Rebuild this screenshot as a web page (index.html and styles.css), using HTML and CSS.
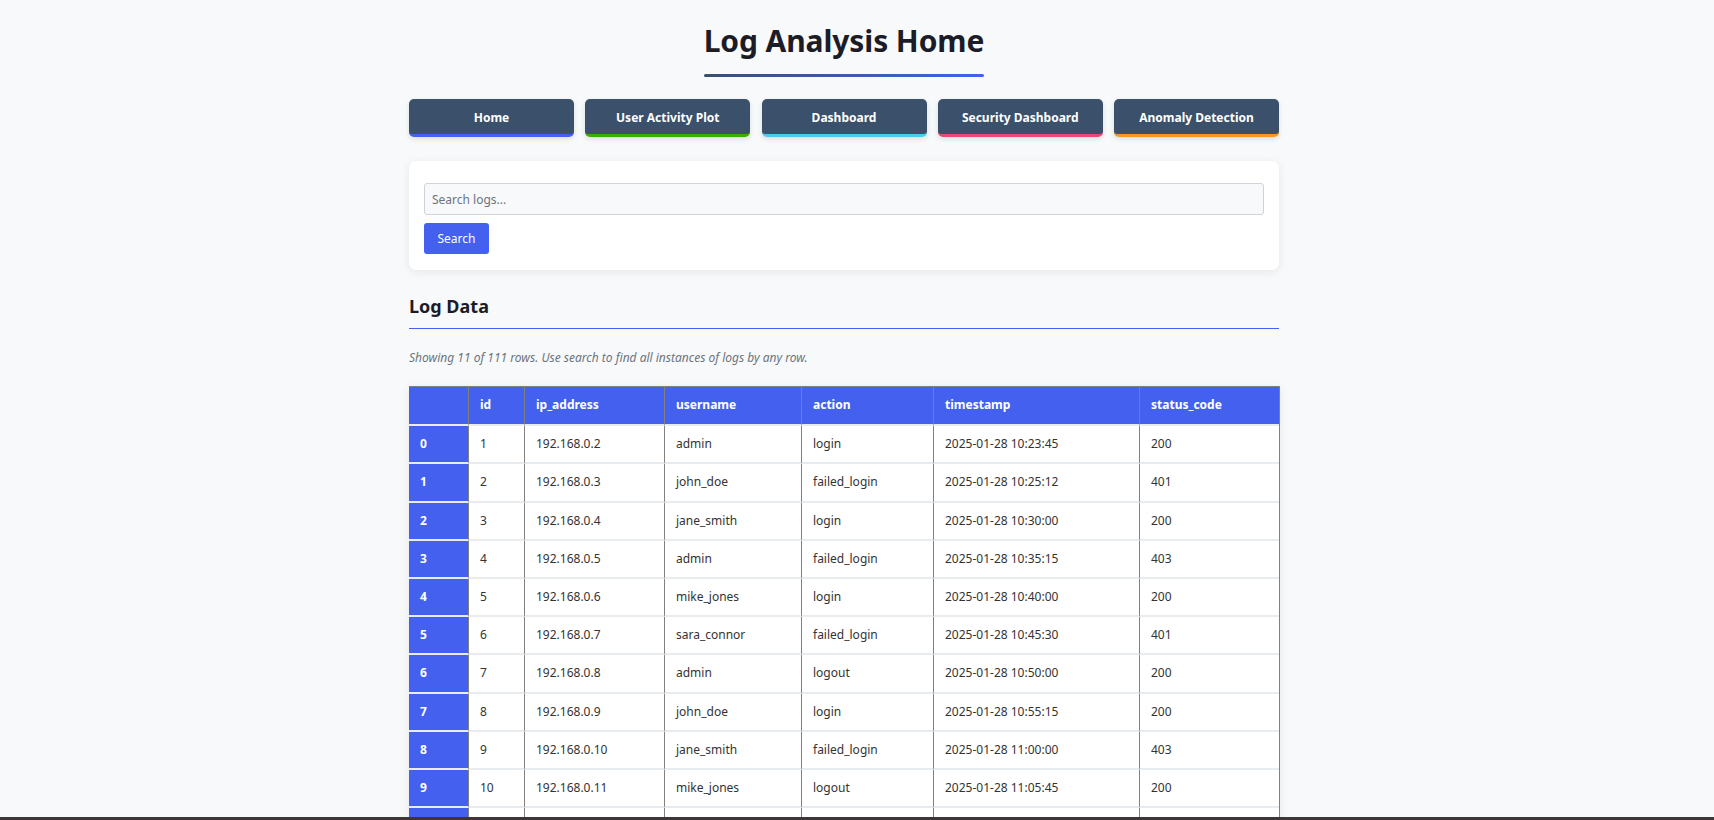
FILE: index.html
```html
<!DOCTYPE html>
<html lang="en">
<head>
<meta charset="utf-8">
<title>Log Analysis Home</title>
<link rel="stylesheet" href="styles.css">
</head>
<body>
<div class="container">
  <header class="page-header">
    <h1 class="title">Log Analysis Home</h1>
  </header>
  <nav class="nav">
    <a class="nav-btn nav-home" href="#">Home</a>
    <a class="nav-btn nav-activity" href="#">User Activity Plot</a>
    <a class="nav-btn nav-dash" href="#">Dashboard</a>
    <a class="nav-btn nav-security" href="#">Security Dashboard</a>
    <a class="nav-btn nav-anomaly" href="#">Anomaly Detection</a>
  </nav>
  <section class="card">
    <form class="search-form">
      <input class="search-input" type="text" placeholder="Search logs...">
      <button class="search-btn" type="button">Search</button>
    </form>
  </section>
  <h2 class="section-title">Log Data</h2>
  <p class="note">Showing 11 of 111 rows. Use search to find all instances of logs by any row.</p>
  <table class="data">
    <thead>
      <tr>
        <th class="c-idx"></th>
        <th class="c-id">id</th>
        <th class="c-ip">ip_address</th>
        <th class="c-user">username</th>
        <th class="c-act">action</th>
        <th class="c-ts">timestamp</th>
        <th class="c-st">status_code</th>
      </tr>
    </thead>
    <tbody>
      <tr><th>0</th><td>1</td><td>192.168.0.2</td><td>admin</td><td>login</td><td>2025-01-28 10:23:45</td><td>200</td></tr>
      <tr><th>1</th><td>2</td><td>192.168.0.3</td><td>john_doe</td><td>failed_login</td><td>2025-01-28 10:25:12</td><td>401</td></tr>
      <tr><th>2</th><td>3</td><td>192.168.0.4</td><td>jane_smith</td><td>login</td><td>2025-01-28 10:30:00</td><td>200</td></tr>
      <tr><th>3</th><td>4</td><td>192.168.0.5</td><td>admin</td><td>failed_login</td><td>2025-01-28 10:35:15</td><td>403</td></tr>
      <tr><th>4</th><td>5</td><td>192.168.0.6</td><td>mike_jones</td><td>login</td><td>2025-01-28 10:40:00</td><td>200</td></tr>
      <tr><th>5</th><td>6</td><td>192.168.0.7</td><td>sara_connor</td><td>failed_login</td><td>2025-01-28 10:45:30</td><td>401</td></tr>
      <tr><th>6</th><td>7</td><td>192.168.0.8</td><td>admin</td><td>logout</td><td>2025-01-28 10:50:00</td><td>200</td></tr>
      <tr><th>7</th><td>8</td><td>192.168.0.9</td><td>john_doe</td><td>login</td><td>2025-01-28 10:55:15</td><td>200</td></tr>
      <tr><th>8</th><td>9</td><td>192.168.0.10</td><td>jane_smith</td><td>failed_login</td><td>2025-01-28 11:00:00</td><td>403</td></tr>
      <tr><th>9</th><td>10</td><td>192.168.0.11</td><td>mike_jones</td><td>logout</td><td>2025-01-28 11:05:45</td><td>200</td></tr>
      <tr><th>10</th><td>11</td><td>192.168.0.12</td><td>sara_connor</td><td>login</td><td>2025-01-28 11:10:00</td><td>200</td></tr>
    </tbody>
  </table>
</div>
<div class="taskbar-edge"></div>
</body>
</html>
```

FILE: styles.css
```css
* { box-sizing: border-box; }

body {
  margin: 0;
  padding: 0 26px 0 0;
  background: #f8f9fa;
  font-family: "Noto Sans", "Open Sans", sans-serif;
  color: #333;
}

.container {
  width: 870px;
  margin: 0 auto;
  padding-bottom: 40px;
}

.page-header {
  text-align: center;
  padding-top: 23px;
}

.title {
  display: inline-block;
  margin: 0;
  font-size: 30px;
  line-height: 36px;
  font-weight: 700;
  color: #1c1c28;
  letter-spacing: -0.1px;
}

.title::after {
  content: "";
  display: block;
  height: 3px;
  margin-top: 15px;
  border-radius: 2px;
  background: linear-gradient(90deg, #3a506b, #4361ee);
}

.nav {
  display: grid;
  grid-template-columns: repeat(5, 1fr);
  gap: 11.25px;
  margin-top: 22px;
}

.nav-btn {
  display: flex;
  align-items: center;
  justify-content: center;
  height: 38px;
  background: #3a506b;
  color: #fff;
  text-decoration: none;
  font-size: 12px;
  font-weight: 700;
  border-radius: 5px;
  border-bottom: 3px solid #4361ee;
  box-shadow: 0 2px 5px rgba(0, 0, 0, 0.12);
  padding-top: 2px;
}

.nav-home { border-bottom-color: #4361ee; }
.nav-activity { border-bottom-color: #38b000; }
.nav-dash { border-bottom-color: #4cc9f0; }
.nav-security { border-bottom-color: #ef476f; }
.nav-anomaly { border-bottom-color: #f8961e; }

.card {
  margin-top: 24px;
  background: #fff;
  border-radius: 7px;
  padding: 22px 15px 16px;
  box-shadow: 0 2px 10px rgba(0, 0, 0, 0.08);
}

.search-form {
  display: flex;
  flex-direction: column;
  align-items: flex-start;
  gap: 8px;
}

.search-input {
  width: 100%;
  height: 32px;
  border: 1px solid #ced4da;
  border-radius: 3px;
  background: #f8f9fa;
  padding: 0 7px;
  font-family: inherit;
  font-size: 12px;
  color: #333;
}

.search-input::placeholder { color: #6c757d; }

.search-btn {
  height: 31px;
  width: 65px;
  border: none;
  border-radius: 3px;
  background: #4361ee;
  color: #fff;
  font-family: inherit;
  font-size: 12px;
}

.section-title {
  margin: 25px 0 0;
  font-size: 18px;
  line-height: 22px;
  font-weight: 700;
  color: #1c1c28;
  padding-bottom: 11px;
  border-bottom: 1px solid #4361ee;
}

.note {
  margin: 20px 0 0;
  font-size: 12px;
  line-height: 18px;
  font-style: italic;
  color: #6c757d;
}

.data {
  margin-top: 19px;
  width: 870px;
  border-collapse: separate;
  border-spacing: 0;
  border-top: 1px solid #808080;
  border-right: 1px solid #808080;
  box-shadow: 0 2px 10px rgba(0, 0, 0, 0.08);
  background: #fff;
  font-size: 12px;
  table-layout: fixed;
}

.data th,
.data td {
  text-align: left;
  padding: 9px 11px;
  line-height: 18.2px;
  border-bottom: 2px solid #e9ecef;
  white-space: nowrap;
}

.data td { border-left: 1px solid #808080; color: #333; }

.data thead th {
  background: #4361ee;
  color: #fff;
  font-weight: 700;
  border-left: 1px solid #808080;
  padding-bottom: 10px;
}

.data thead th:first-child { border-left: none; }

.data tbody th {
  background: #4361ee;
  color: #fff;
  font-weight: 700;
}

.c-idx { width: 59px; }
.c-id { width: 56px; }
.c-ip { width: 140px; }
.c-user { width: 137px; }
.c-act { width: 132px; }
.c-ts { width: 206px; }
.c-st { width: 140px; }

.taskbar-edge {
  position: fixed;
  left: 0;
  right: 0;
  bottom: 0;
  height: 3px;
  background: #3d3538;
}
```
